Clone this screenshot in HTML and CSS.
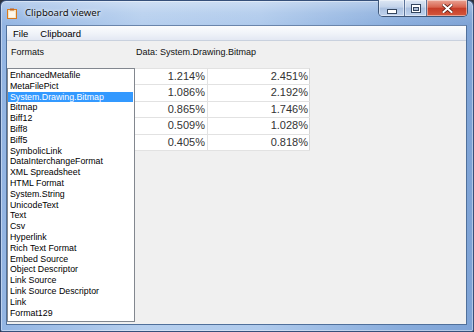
FILE: index.html
```html
<!DOCTYPE html>
<html>
<head>
<meta charset="utf-8">
<title>Clipboard viewer</title>
<link rel="stylesheet" href="styles.css">
</head>
<body>
<div class="window">
  <div class="titlebar">
    <svg class="app-icon" width="10" height="11" viewBox="0 0 10 11">
      <rect x="0.5" y="1.5" width="9" height="9" fill="#f3e4c4" stroke="#d97a1e"/>
      <rect x="3" y="0.5" width="4" height="2" fill="#c9661a"/>
      <rect x="2" y="3.5" width="6" height="6" fill="#fff8ea"/>
    </svg>
    <span class="title">Clipboard viewer</span>
    <div class="caption-buttons">
      <div class="cbtn cbtn-min">
        <svg width="10" height="5" viewBox="0 0 10 5"><rect x="0.5" y="0.5" width="9" height="4" fill="#fff" stroke="#34465f"/></svg>
      </div>
      <div class="cbtn cbtn-max">
        <svg width="10" height="9" viewBox="0 0 10 9"><rect x="0.5" y="0.5" width="9" height="8" fill="#fff" stroke="#34465f"/><rect x="2.5" y="3.5" width="5" height="3" fill="#aebfd6" stroke="#34465f"/></svg>
      </div>
      <div class="cbtn cbtn-close">
        <svg width="11" height="9" viewBox="0 0 11 9"><path d="M1.5 1 L9.5 8 M9.5 1 L1.5 8" stroke="#5a1d14" stroke-width="3.6" stroke-linecap="square"/><path d="M1.5 1 L9.5 8 M9.5 1 L1.5 8" stroke="#fff" stroke-width="2" stroke-linecap="square"/></svg>
      </div>
    </div>
  </div>
  <div class="client">
    <div class="menubar">
      <span class="menu-item">File</span>
      <span class="menu-item">Clipboard</span>
    </div>
    <div class="content">
      <div class="label label-formats">Formats</div>
      <div class="label label-data">Data: System.Drawing.Bitmap</div>
      <ul class="listbox">
        <li>EnhancedMetafile</li>
        <li>MetaFilePict</li>
        <li class="selected">System.Drawing.Bitmap</li>
        <li>Bitmap</li>
        <li>Biff12</li>
        <li>Biff8</li>
        <li>Biff5</li>
        <li>SymbolicLink</li>
        <li>DataInterchangeFormat</li>
        <li>XML Spreadsheet</li>
        <li>HTML Format</li>
        <li>System.String</li>
        <li>UnicodeText</li>
        <li>Text</li>
        <li>Csv</li>
        <li>Hyperlink</li>
        <li>Rich Text Format</li>
        <li>Embed Source</li>
        <li>Object Descriptor</li>
        <li>Link Source</li>
        <li>Link Source Descriptor</li>
        <li>Link</li>
        <li>Format129</li>
      </ul>
      <div class="datagrid">
        <div class="cell">1.214%</div><div class="cell">2.451%</div>
        <div class="cell">1.086%</div><div class="cell">2.192%</div>
        <div class="cell">0.865%</div><div class="cell">1.746%</div>
        <div class="cell">0.509%</div><div class="cell">1.028%</div>
        <div class="cell">0.405%</div><div class="cell">0.818%</div>
      </div>
    </div>
  </div>
</div>
</body>
</html>
```

FILE: styles.css
```css
html, body {
  margin: 0;
  padding: 0;
}

body {
  width: 474px;
  height: 332px;
  overflow: hidden;
  background: #2e3440;
}

.window {
  width: 474px;
  height: 332px;
  box-sizing: border-box;
  border: 1px solid #36507a;
  border-radius: 6px 6px 2px 2px;
  background:
    linear-gradient(180deg, rgba(255,255,255,0.35) 0px, rgba(255,255,255,0.1) 12px, rgba(255,255,255,0) 24px),
    linear-gradient(90deg, #93b5e3 0%, #b6cfee 30%, #afcaec 55%, #88acdc 85%, #7ea3d6 100%);
  box-shadow: inset 0 0 0 1px rgba(255,255,255,0.4);
  display: flex;
  flex-direction: column;
}

.titlebar {
  height: 24px;
  display: flex;
  align-items: flex-start;
  padding-left: 6px;
}

.app-icon {
  margin-top: 7px;
  flex: none;
}

.title {
  margin-left: 8px;
  margin-top: 4px;
  font-family: "Noto Sans", sans-serif;
  font-size: 9.6px;
  line-height: 15px;
  color: #111;
  text-shadow: 0 0 6px rgba(255,255,255,0.9), 0 0 3px rgba(255,255,255,0.9);
}

.caption-buttons {
  margin-left: auto;
  margin-right: 5px;
  margin-top: -1px;
  height: 17px;
  display: flex;
  border: 1px solid #3e5678;
  border-top: none;
  border-radius: 0 0 5px 5px;
  overflow: hidden;
  box-sizing: border-box;
}

.cbtn {
  display: flex;
  align-items: center;
  justify-content: center;
  box-shadow: inset 0 0 0 1px rgba(255,255,255,0.45);
}

.cbtn-min {
  width: 25px;
  border-right: 1px solid #5b7399;
  background: linear-gradient(180deg, #dde7f4 0%, #c3d3ea 45%, #abc1e0 50%, #c0d3ee 100%);
}

.cbtn-min svg {
  margin-top: 6px;
}

.cbtn-max {
  width: 21px;
  border-right: 1px solid #5b7399;
  background: linear-gradient(180deg, #dde7f4 0%, #c3d3ea 45%, #abc1e0 50%, #c0d3ee 100%);
}

.cbtn-close {
  width: 40px;
  background: linear-gradient(180deg, #eaa495 0%, #d8644f 45%, #c63d28 52%, #d5583e 100%);
}

.client {
  margin: 0 6px 0 5px;
  height: 300px;
  box-sizing: border-box;
  border: 1px solid #50709b;
  border-top-color: #6a85ab;
  background: #f0f0f0;
  display: flex;
  flex-direction: column;
}

.menubar {
  height: 15px;
  box-sizing: border-box;
  border-bottom: 1px solid #c9d1de;
  background: linear-gradient(180deg, #fbfcfd 0%, #f1f4f9 50%, #e3e8f3 100%);
  display: flex;
  align-items: center;
  padding-left: 6px;
  gap: 12px;
  font-family: "Liberation Sans", Arial, sans-serif;
  font-size: 9.5px;
  color: #000;
}

.content {
  display: grid;
  grid-template-columns: 128px 175px;
  grid-template-rows: 27px auto;
  align-items: start;
}

.label {
  font-family: "Liberation Sans", Arial, sans-serif;
  font-size: 9px;
  line-height: 11px;
  color: #111;
  padding-top: 6px;
}

.label-formats {
  padding-left: 4px;
}

.label-data {
  padding-left: 1px;
}

.listbox {
  margin: 0;
  padding: 1px 0 0 0;
  list-style: none;
  height: 254px;
  box-sizing: border-box;
  border: 1px solid #82878f;
  background: #fff;
  font-family: "Liberation Sans", Arial, sans-serif;
  font-size: 8.8px;
  line-height: 10.8px;
  color: #000;
  overflow: hidden;
}

.listbox li {
  padding-left: 2px;
  margin-right: 1px;
  white-space: nowrap;
}

.listbox li.selected {
  background: #3399ff;
  color: #fff;
}

.datagrid {
  display: grid;
  grid-template-columns: 73px 102px;
  grid-auto-rows: 16.4px;
  border-top: 1px solid #e2e2e2;
  border-right: 1px solid #d4d4d4;
  background: #fff;
}

.cell {
  box-sizing: border-box;
  border-bottom: 1px solid #e2e2e2;
  border-right: 1px solid #e2e2e2;
  text-align: right;
  padding-right: 2px;
  font-family: "Liberation Sans", Arial, sans-serif;
  font-size: 11px;
  line-height: 15.4px;
  color: #333;
}

.cell:nth-child(2n) {
  border-right: none;
}
```
